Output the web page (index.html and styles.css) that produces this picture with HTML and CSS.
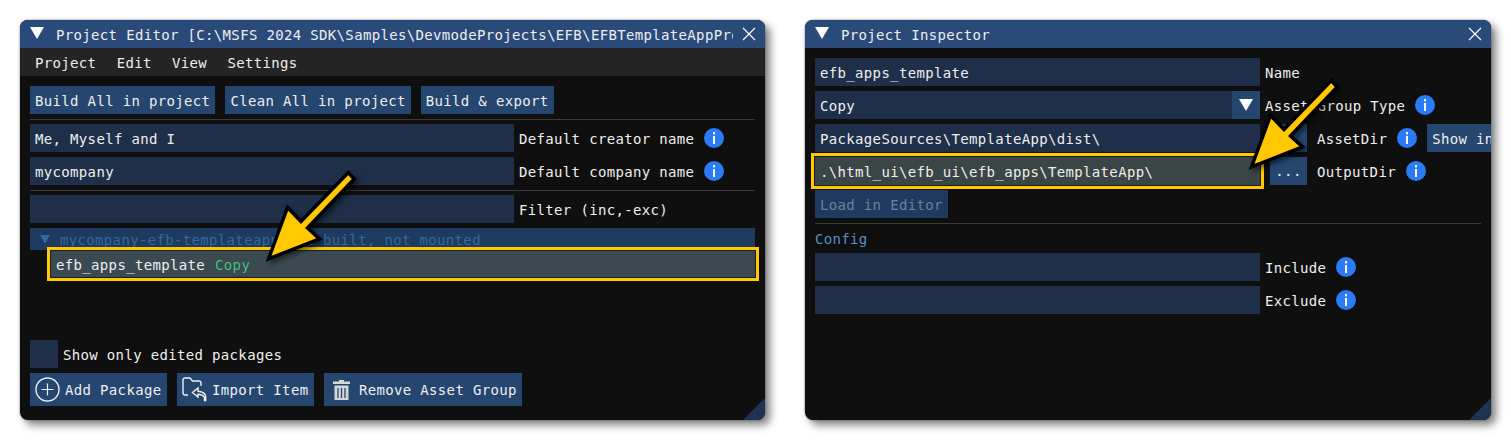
FILE: index.html
```html
<!DOCTYPE html>
<html lang="en">
<head>
<meta charset="utf-8">
<title>Project Editor and Inspector</title>
<link rel="stylesheet" href="styles.css">
</head>
<body>
<svg class="defs" width="0" height="0" aria-hidden="true">
  <defs>
    <symbol id="i-info" viewBox="0 0 20 20">
      <circle cx="10" cy="10" r="10" fill="#2a7bf6"/>
      <rect x="9" y="4" width="2" height="2.4" fill="#fff"/>
      <rect x="9" y="8" width="2" height="8" fill="#fff"/>
    </symbol>
    <symbol id="i-arrow" viewBox="0 0 110 110">
      <polygon points="8.500,102 27.500,50.500 41,64.500 88.300,15.500 94.200,22 47.500,71 59.500,82" fill="#ffc800" stroke="#000" stroke-width="3.5" stroke-miterlimit="8"/>
    </symbol>
  </defs>
</svg>
<main class="desk">
  <section class="window win-editor">
    <header class="titlebar">
      <span class="tri"></span>
      <span class="title">Project Editor [C:\MSFS 2024 SDK\Samples\DevmodeProjects\EFB\EFBTemplateAppPro</span>
      <svg class="close" viewBox="0 0 14 14"><path d="M1 1 13 13M13 1 1 13" stroke="#fff" stroke-width="1.1" fill="none"/></svg>
    </header>
    <nav class="menubar">
      <span>Project</span><span>Edit</span><span>View</span><span>Settings</span>
    </nav>
    <div class="content">
      <div class="row gap10">
        <span class="btn">Build All in project</span>
        <span class="btn">Clean All in project</span>
        <span class="btn">Build &amp; export</span>
      </div>
      <hr class="sep">
      <div class="rows">
        <div class="row"><span class="field f-484">Me, Myself and I</span><span class="label">Default creator name</span><svg class="info"><use href="#i-info"/></svg></div>
        <div class="row"><span class="field f-484">mycompany</span><span class="label">Default company name</span><svg class="info"><use href="#i-info"/></svg></div>
      </div>
      <hr class="sep">
      <div class="row"><span class="field f-484"></span><span class="label">Filter (inc,-exc)</span></div>
      <div class="tree-head"><span class="tree-tri"></span><span>mycompany-efb-templateapp not built, not mounted</span></div>
      <div class="tree-item"><span>efb_apps_template</span><span class="green">Copy</span></div>
      <div class="bottom">
        <div class="row"><span class="check"></span><span class="label">Show only edited packages</span></div>
        <div class="row row-tall gap10">
          <span class="btn btn-icon">
            <svg class="ic" viewBox="0 0 25 25"><circle cx="12.5" cy="12.5" r="11.5" fill="none" stroke="#f0f0f0" stroke-width="1.4"/><path d="M12.5 6.5v12M6.5 12.5h12" stroke="#f0f0f0" stroke-width="1.2"/></svg>
            Add Package
          </span>
          <span class="btn btn-icon">
            <svg class="ic" viewBox="0 0 25 25"><path d="M6 18H3a2 2 0 0 1-2-2V3a2 2 0 0 1 2-2h5l2.500 3H17a2 2 0 0 1 2 2v3" fill="none" stroke="#f0f0f0" stroke-width="1.4"/><path d="M16 11l-5.500 4.500L16 20v-2.800c3 0 5 .8 6.500 3.300v3h1.200v-3c0-4-3.200-6-7.700-6.300z" fill="none" stroke="#f0f0f0" stroke-width="1.4"/></svg>
            Import Item
          </span>
          <span class="btn btn-icon btn-trash">
            <svg class="ic-trash" viewBox="0 0 17 20"><path d="M6 0h5v1.500h6V4H0V1.500h6z" fill="#d6d6d6"/><path d="M1.500 5.500h14V20h-14z" fill="#d6d6d6"/><path d="M5 8v10M8.500 8v10M12 8v10" stroke="#24466f" stroke-width="1.3"/></svg>
            Remove Asset Group
          </span>
        </div>
      </div>
    </div>
    <span class="grip"></span>
    <svg class="arrow arrow-editor"><use href="#i-arrow"/></svg>
  </section>

  <section class="window win-inspector">
    <header class="titlebar">
      <span class="tri"></span>
      <span class="title">Project Inspector</span>
      <svg class="close" viewBox="0 0 14 14"><path d="M1 1 13 13M13 1 1 13" stroke="#fff" stroke-width="1.1" fill="none"/></svg>
    </header>
    <div class="content">
      <div class="rows">
        <div class="row"><span class="field f-445">efb_apps_template</span><span class="label">Name</span></div>
        <div class="row">
          <span class="combo"><span class="field f-fill">Copy</span><span class="combo-btn"><span class="tri tri-combo"></span></span></span>
          <span class="label">Asset Group Type</span><svg class="info"><use href="#i-info"/></svg>
        </div>
        <div class="row">
          <span class="field f-445">PackageSources\TemplateApp\dist\</span>
          <span class="btn btn-dots">...</span>
          <span class="label">AssetDir</span><svg class="info"><use href="#i-info"/></svg>
          <span class="btn btn-show">Show in</span>
        </div>
        <div class="row">
          <span class="field f-445 field-hl">.\html_ui\efb_ui\efb_apps\TemplateApp\</span>
          <span class="btn btn-dots">...</span>
          <span class="label">OutputDir</span><svg class="info"><use href="#i-info"/></svg>
        </div>
        <div class="row"><span class="btn btn-dim">Load in Editor</span></div>
      </div>
      <hr class="sep">
      <div class="heading">Config</div>
      <div class="rows">
        <div class="row"><span class="field f-445"></span><span class="label">Include</span><svg class="info"><use href="#i-info"/></svg></div>
        <div class="row"><span class="field f-445"></span><span class="label">Exclude</span><svg class="info"><use href="#i-info"/></svg></div>
      </div>
    </div>
    <span class="grip"></span>
    <svg class="arrow arrow-inspector"><use href="#i-arrow"/></svg>
  </section>
</main>
</body>
</html>
```
FILE: styles.css
```css
* { box-sizing: border-box; }
html, body { margin: 0; padding: 0; background: #fff; }
body {
  width: 1511px;
  height: 441px;
  overflow: hidden;
  font-family: "DejaVu Sans Mono", "Liberation Mono", monospace;
  font-size: 14px;
  letter-spacing: .34px;
  color: #eeeeee;
}
.defs { position: absolute; }
.desk { display: flex; gap: 40px; padding: 20px; }
.window {
  position: relative;
  display: flex;
  flex-direction: column;
  height: 400px;
  background: #0f0f0f;
  border-radius: 8px;
  box-shadow: 5px 5px 8px rgba(0, 0, 0, .5), 0 0 2px rgba(0, 0, 0, .5);
  overflow: hidden;
}
.win-editor { width: 745px; }
.win-inspector { width: 686px; }
.titlebar {
  display: flex;
  align-items: center;
  height: 28px;
  flex: none;
  padding: 0 9px 0 10px;
  background: #2a4a7a;
}
.tri {
  width: 0;
  height: 0;
  flex: none;
  margin-top: -3px;
  border-left: 7px solid transparent;
  border-right: 7px solid transparent;
  border-top: 12px solid #fff;
}
.title {
  flex: 1;
  margin-left: 12px;
  overflow: hidden;
  white-space: nowrap;
  padding-top: 1px;
}
.close { width: 14px; height: 14px; flex: none; margin: -1px 0 0 9px; }
.menubar {
  display: flex;
  gap: 20.300px;
  align-items: center;
  height: 28px;
  flex: none;
  padding: 2px 0 0 15px;
  background: #242424;
}
.content {
  display: flex;
  flex-direction: column;
  flex: 1;
  min-height: 0;
  padding: 10px 10px 14px;
}
.row { display: flex; align-items: center; gap: 5px; height: 28px; flex: none; white-space: nowrap; }
.row-tall { height: 33px; }
.gap10 { gap: 10px; }
.rows { display: flex; flex-direction: column; gap: 5px; }
.sep { width: 100%; height: 1px; flex: none; margin: 5px 0 4px; border: 0; background: #3a3a3a; }
.btn {
  display: flex;
  align-items: center;
  height: 28px;
  flex: none;
  padding: 1px 5px 0;
  background: #24466f;
  white-space: nowrap;
}
.field {
  display: flex;
  align-items: center;
  height: 28px;
  flex: none;
  padding: 1px 5px 0;
  background: #1f2f49;
}
.f-484 { width: 484px; }
.f-445 { width: 445px; }
.f-fill { flex: 1; }
.label { flex: none; padding-top: 1px; }
.info { width: 20px; height: 20px; flex: none; margin-left: 5px; }
.tree-head {
  display: flex;
  align-items: center;
  gap: 10px;
  height: 22px;
  margin-top: 5px;
  padding: 1px 0 0 10px;
  background: #1e3a5f;
  color: #2d6a9f;
}
.tree-tri {
  width: 0;
  height: 0;
  border-left: 5.500px solid transparent;
  border-right: 5.500px solid transparent;
  border-top: 9px solid #2d6a9f;
}
.tree-item {
  position: relative;
  display: flex;
  align-items: center;
  gap: 10px;
  height: 28px;
  margin: 0 -1px 0 20px;
  padding: 1px 0 0 6px;
  background: #3a4a50;
  box-shadow: 0 0 0 3px #ffc800, inset 0 0 0 1px #1c1c1c;
}
.green { color: #3fbf80; }
.bottom { display: flex; flex-direction: column; gap: 5px; margin-top: auto; }
.bottom .btn { height: 33px; }
.check { width: 28px; height: 28px; flex: none; background: #1f2f49; }
.btn-icon { gap: 5px; padding: 0 5.500px 0 5px; }
.btn-trash { gap: 9px; padding-left: 9px; }
.ic { width: 25px; height: 25px; flex: none; }
.ic-trash { width: 17px; height: 20px; flex: none; }
.combo { display: flex; width: 445px; height: 28px; flex: none; }
.combo-btn {
  display: flex;
  align-items: center;
  justify-content: center;
  width: 28px;
  background: #24466f;
}
.tri-combo { margin: 0; }
.btn-dots { justify-content: center; width: 37px; padding: 0; margin: 0 5px; }
.btn-show { margin-left: 5px; }
.field-hl {
  position: relative;
  background: #3a4545;
  box-shadow: 0 0 0 1px #1c1c1c, 0 0 0 4px #ffc800;
}
.btn-dim { background: #1e3a5f; color: #6e8096; }
.heading { display: flex; align-items: center; height: 20px; margin-bottom: 5px; padding-top: 1px; color: #5b8fc4; }
.grip {
  position: absolute;
  right: 0;
  bottom: 0;
  width: 22px;
  height: 22px;
  background: #1e3352;
  clip-path: polygon(100% 0, 100% 100%, 0 100%);
}
.arrow {
  position: absolute;
  width: 110px;
  height: 110px;
  filter: drop-shadow(3px 3px 2px rgba(0, 0, 0, .45));
}
.arrow-editor { left: 240px; top: 137px; }
.arrow-inspector { left: 438px; top: 45px; }
```
